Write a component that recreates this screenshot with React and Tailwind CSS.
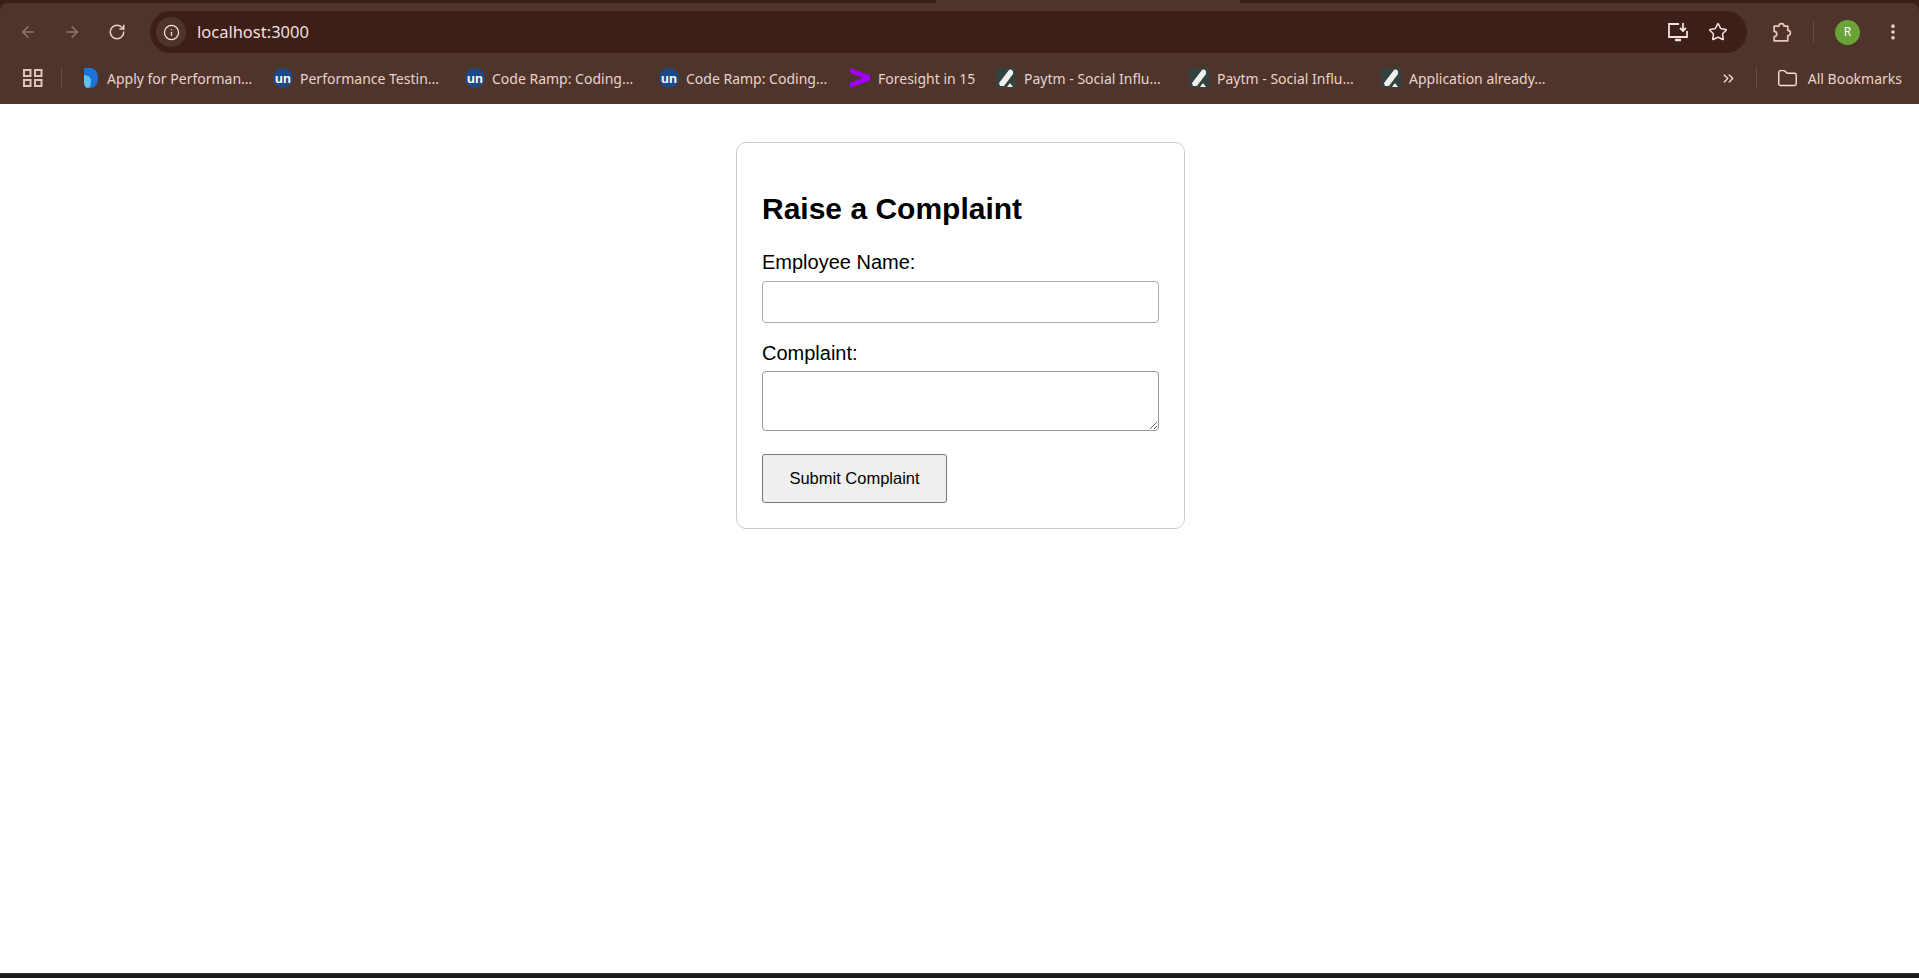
import React from 'react';
import { ArrowLeft, ArrowRight, RotateCw, Info, Star, Folder, EllipsisVertical, ChevronsRight } from 'lucide-react';

const chromeFont = "font-['Noto_Sans',sans-serif]";

function FaviconBlue() {
  return (
    <svg width="16" height="20" viewBox="0 0 16 20" className="shrink-0">
      <path d="M1 0h6c5 0 8 4 8 10s-3 10-8 10H5c3-1 3-4 3-7 0-4-3-6-7-6z" fill="#1a73d8" />
      <path d="M1 7c4 0 7 2 7 6 0 3 0 6-3 7-2 0-4-2-4-5z" fill="#5cc0f5" />
    </svg>
  );
}

function FaviconUn() {
  return (
    <span className="w-5 h-5 mr-[-1px] rounded-full bg-[#1c4a86] flex items-center justify-center shrink-0 text-white text-[13px] font-bold leading-none font-['Liberation_Sans',sans-serif]">
      un
    </span>
  );
}

function FaviconAccenture() {
  return (
    <svg width="20" height="20" viewBox="0 0 20 20" className="shrink-0">
      <path d="M0 0l20 7.5v5L0 20v-5l13-5L0 5z" fill="#a100ff" />
    </svg>
  );
}

function FaviconPaytm() {
  return (
    <svg width="20" height="20" viewBox="0 0 20 20" className="shrink-0">
      <rect width="20" height="20" fill="#33413f" />
      <path d="M3 15L13 2c2-1 4 0 4 2v2L8 18H4z" fill="#f1f1f1" />
      <path d="M11 19l3-4 3 4z" fill="#f1f1f1" />
    </svg>
  );
}

const bookmarks = [
  { icon: <FaviconBlue />, label: 'Apply for Performan...', width: 'w-[190px]' },
  { icon: <FaviconUn />, label: 'Performance Testin...', width: 'w-[192px]' },
  { icon: <FaviconUn />, label: 'Code Ramp: Coding...', width: 'w-[194px]' },
  { icon: <FaviconUn />, label: 'Code Ramp: Coding...', width: 'w-[191px]' },
  { icon: <FaviconAccenture />, label: 'Foresight in 15', width: 'w-[146px]' },
  { icon: <FaviconPaytm />, label: 'Paytm - Social Influ...', width: 'w-[193px]' },
  { icon: <FaviconPaytm />, label: 'Paytm - Social Influ...', width: 'w-[192px]' },
  { icon: <FaviconPaytm />, label: 'Application already...', width: 'w-[190px]' },
];

function BrowserChrome() {
  return (
    <div className={`bg-[#3a1f18] shrink-0 ${chromeFont}`}>
      <div className="h-[3px] flex">
        <div className="w-[936px] bg-[#3a1f18]" />
        <div className="w-[304px] bg-[#4f342c]" />
        <div className="flex-1 bg-[#3a1f18]" />
      </div>
      <div className="bg-[#4f342c] rounded-t-lg">
        <div className="h-[58px] flex items-center">
          <div className="w-[150px] flex items-center pl-[19px] gap-[26px] shrink-0">
            <ArrowLeft size={18} strokeWidth={1.8} className="text-[#8f7a73]" />
            <ArrowRight size={18} strokeWidth={1.8} className="text-[#8f7a73]" />
            <RotateCw size={18} strokeWidth={2} className="ml-[1px] text-[#ecd0c6]" />
          </div>
          <div className="w-[1597px] h-[42px] rounded-full bg-[#3b1f18] flex items-center pl-[6px] pr-[19px] shrink-0">
            <span className="w-[30px] h-[30px] rounded-full bg-[#4f342c] flex items-center justify-center shrink-0">
              <Info size={17} strokeWidth={1.8} className="text-[#f2e2dc]" />
            </span>
            <span className="ml-[11px] text-[16.5px] text-[#f5dfd7] leading-none">localhost:3000</span>
            <div className="ml-auto flex items-center gap-[19px]">
              <svg width="22" height="20" viewBox="0 0 22 20" fill="none" stroke="#f2e2dc" strokeWidth="1.8">
                <path d="M12 2H2v13h18V9" />
                <path d="M8 18h6" strokeWidth="2.5" />
                <path d="M16 1v8M13 6l3 3 3-3" />
              </svg>
              <Star size={20} strokeWidth={1.8} className="text-[#f2e2dc]" />
            </div>
          </div>
          <div className="flex-1 flex items-center pl-[24px]">
            <svg width="21" height="21" viewBox="0 0 20 20" fill="none" stroke="#ecc4b8" strokeWidth="1.6" strokeLinejoin="round">
              <path d="M3 4h4.5a2.5 2.5 0 0 1 5 0H16v4a2.5 2.5 0 0 1 0 5v5H3v-4a2.5 2.5 0 0 0 0-5z" />
            </svg>
            <div className="w-px h-5 bg-[#6a4d45] ml-[21px]" />
            <span className="ml-[21px] w-[25px] h-[25px] rounded-full bg-[#6aa336] text-white text-[12px] flex items-center justify-center">R</span>
            <EllipsisVertical size={20} strokeWidth={2.4} className="text-[#ecd0c6] ml-[23px]" />
          </div>
        </div>
        <div className="h-[43px] pb-[9px] flex items-center text-[14px] text-[#e8d3cb]">
          <svg width="20" height="18" viewBox="0 0 20 18" fill="none" stroke="#e0c4ba" strokeWidth="2" className="ml-[23px] shrink-0">
            <rect x="1" y="1" width="6.5" height="6" />
            <rect x="12" y="1" width="6.5" height="6" />
            <rect x="1" y="11" width="6.5" height="6" />
            <rect x="12" y="11" width="6.5" height="6" />
          </svg>
          <div className="w-px h-5 bg-[#6a4d45] ml-[18px] mr-[21px] shrink-0" />
          {bookmarks.map((b, i) => (
            <div key={i} className={`flex items-center gap-[8px] shrink-0 ${b.width}`}>
              {b.icon}
              <span className="whitespace-nowrap">{b.label}</span>
            </div>
          ))}
          <div className="ml-auto flex items-center pr-[17px]">
            <ChevronsRight size={17} strokeWidth={1.8} className="text-[#f2e2dc]" />
            <div className="w-px h-5 bg-[#6a4d45] ml-[19px] shrink-0" />
            <Folder size={21} strokeWidth={1.6} className="ml-[20px] text-[#f2e2dc] shrink-0" />
            <span className="ml-[10px] whitespace-nowrap">All Bookmarks</span>
          </div>
        </div>
      </div>
    </div>
  );
}

function ComplaintForm() {
  return (
    <div className="flex justify-center pl-[2px] pt-[38px]">
      <form className="w-[449px] border border-[#ccc] rounded-[10px] p-[25px] bg-white text-black font-['Liberation_Sans',sans-serif]">
        <h2 className="text-[30px] font-bold leading-[34px] mt-[24px] mb-[25px]">Raise a Complaint</h2>
        <label className="block text-[20px] leading-[23px] mb-[7px]">Employee Name:</label>
        <input type="text" className="block w-full h-[42px] border border-[#aaa] rounded-[4px] mb-[19px]" />
        <label className="block text-[20px] leading-[23px] mb-[6px]">Complaint:</label>
        <textarea className="block w-full h-[60px] border border-[#999] rounded-[4px] resize mb-[23px]" />
        <button type="button" className="block w-[185px] h-[49px] border border-[#767676] rounded-[3px] bg-[#efefef] text-[16.5px]">
          Submit Complaint
        </button>
      </form>
    </div>
  );
}

export default function App() {
  return (
    <div className="h-[978px] flex flex-col bg-white overflow-hidden">
      <BrowserChrome />
      <div className="flex-1">
        <ComplaintForm />
      </div>
      <div className="h-[5px] bg-[#1b1b1b] border-t border-[#333] shrink-0" />
    </div>
  );
}
